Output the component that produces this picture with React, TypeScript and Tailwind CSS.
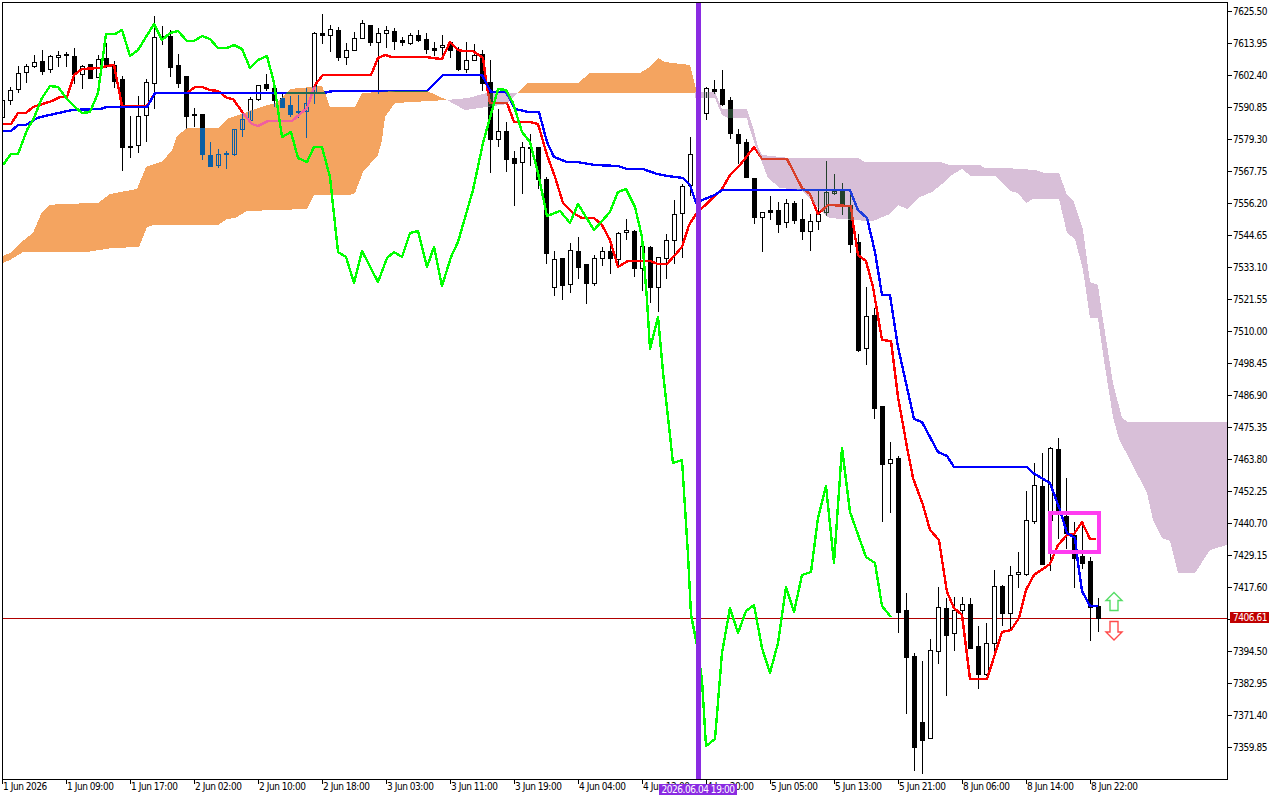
type Candle = [number, number, number, number, number]

// wick top, body top, body bottom, wick bottom, filled; one bar every 8px from x=2
const candles: Candle[] = [
  [100, 100, 117, 117, 0], [87, 90, 100, 104, 0], [66, 73, 89, 92, 0], [64, 66, 72, 82, 0], [55, 62, 66, 67, 0],
  [50, 61, 71, 74, 1], [55, 56, 69, 72, 0], [51, 55, 57, 66, 0], [52, 54, 55, 66, 1], [48, 56, 74, 83, 1],
  [65, 66, 74, 88, 0], [64, 64, 78, 78, 1], [55, 59, 77, 77, 0], [43, 58, 65, 67, 1], [61, 65, 81, 87, 1],
  [76, 79, 147, 170, 1], [116, 146, 147, 157, 1], [96, 116, 145, 152, 0], [79, 82, 115, 141, 0], [16, 37, 83, 108, 0],
  [26, 36, 38, 44, 1], [30, 36, 67, 76, 1], [54, 65, 83, 87, 1], [76, 76, 116, 128, 1], [108, 114, 115, 126, 1],
  [114, 114, 154, 159, 1], [142, 155, 166, 166, 1], [149, 154, 165, 167, 0], [151, 153, 154, 168, 1], [129, 129, 154, 155, 0],
  [112, 119, 129, 136, 0], [97, 99, 120, 122, 0], [85, 85, 99, 100, 0], [74, 84, 88, 90, 1], [88, 88, 100, 106, 1],
  [93, 98, 107, 107, 1], [96, 105, 114, 116, 1], [95, 111, 112, 117, 1], [88, 103, 111, 137, 0], [32, 33, 92, 103, 0],
  [14, 33, 35, 43, 1], [25, 29, 35, 51, 0], [27, 30, 57, 60, 1], [43, 50, 57, 64, 0], [32, 38, 50, 50, 0],
  [20, 23, 38, 38, 0], [25, 25, 42, 45, 1], [28, 33, 42, 93, 0], [26, 30, 33, 47, 0], [28, 31, 41, 49, 1],
  [37, 40, 42, 45, 1], [33, 35, 43, 44, 0], [30, 35, 40, 41, 1], [33, 39, 49, 53, 1], [42, 48, 50, 55, 1],
  [35, 45, 47, 57, 0], [42, 42, 50, 57, 1], [47, 49, 69, 70, 1], [42, 60, 69, 72, 0], [44, 55, 60, 60, 0],
  [50, 54, 83, 90, 1], [60, 82, 139, 172, 1], [109, 131, 139, 146, 0], [122, 131, 159, 171, 1], [151, 158, 163, 205, 1],
  [142, 147, 162, 193, 0], [134, 147, 148, 165, 1], [147, 147, 179, 188, 1], [177, 179, 253, 263, 1], [251, 259, 287, 295, 0],
  [258, 258, 285, 299, 1], [243, 250, 284, 292, 0], [237, 251, 267, 278, 1], [264, 264, 283, 303, 1], [255, 258, 283, 285, 0],
  [247, 251, 258, 265, 0], [238, 251, 258, 273, 1], [232, 233, 259, 265, 0], [219, 230, 232, 239, 0], [230, 231, 268, 276, 1],
  [246, 246, 268, 290, 0], [246, 247, 287, 302, 1], [257, 257, 287, 311, 0], [234, 240, 258, 278, 0], [200, 214, 240, 263, 0],
  [184, 186, 213, 257, 0], [137, 154, 185, 195, 0], [150, 160, 200, 210, 0], [87, 88, 113, 119, 0], [80, 89, 91, 93, 1],
  [70, 89, 104, 105, 1], [97, 100, 133, 138, 1], [129, 134, 143, 163, 1], [139, 142, 177, 177, 1], [178, 178, 217, 223, 1],
  [212, 212, 217, 251, 0], [196, 210, 212, 219, 1], [202, 210, 224, 232, 1], [199, 203, 222, 227, 0], [201, 203, 220, 223, 1],
  [199, 219, 231, 239, 1], [214, 221, 231, 250, 0], [191, 214, 221, 229, 0], [161, 192, 212, 215, 0], [174, 191, 193, 194, 0],
  [183, 191, 204, 214, 1], [193, 205, 244, 252, 1], [234, 242, 350, 351, 1], [287, 316, 348, 364, 0], [308, 315, 408, 418, 1],
  [406, 406, 464, 521, 1], [442, 459, 463, 512, 0], [456, 458, 612, 632, 1], [593, 610, 657, 713, 1], [653, 656, 747, 770, 1],
  [661, 722, 740, 773, 1], [639, 650, 738, 738, 0], [587, 607, 651, 663, 0], [598, 608, 635, 695, 1], [597, 610, 633, 650, 0],
  [597, 604, 610, 617, 0], [598, 604, 648, 648, 1], [626, 646, 674, 688, 1], [623, 643, 674, 675, 0], [570, 586, 643, 650, 0],
  [585, 586, 613, 625, 1], [566, 575, 613, 629, 0], [552, 572, 574, 587, 0], [491, 520, 574, 575, 0], [463, 485, 521, 523, 0],
  [453, 486, 564, 564, 1], [447, 448, 520, 570, 0], [438, 449, 512, 538, 1], [478, 516, 533, 548, 1], [522, 535, 558, 587, 1],
  [522, 556, 563, 568, 1], [557, 561, 607, 640, 1], [598, 606, 618, 631, 1],
]

const redLine =
  '3,124 11,124 18,113 26,113 33,107 52,101 60,97 67,97 74,75 82,69 100,68 107,66 114,65 122,106 147,106 155,93 187,93 195,87 202,87 210,90 218,91 227,98 233,99 243,113 252,124 258,126 268,121 292,121 307,108 315,85 323,75 371,75 378,58 385,55 392,57 427,57 432,58 442,59 450,42 458,50 463,51 473,51 483,58 487,87 490,103 507,103 514,122 530,122 538,124 547,155 555,177 563,203 573,213 582,218 594,218 602,225 610,240 618,267 628,261 650,261 658,264 667,264 682,247 689,225 696,214 722,189 730,175 740,165 754,147 762,159 787,159 802,188 810,194 818,214 828,205 851,206 853,223 858,255 866,261 873,287 882,340 891,341 898,397 907,447 913,478 923,505 930,530 939,540 947,592 954,608 962,615 970,679 987,679 1002,632 1011,630 1019,618 1026,590 1034,575 1050,564 1058,545 1067,535 1074,534 1082,522 1090,539 1096,539'

const blueLine =
  '3,131 11,131 18,125 26,125 37,118 45,116 72,110 100,109 107,107 147,107 155,93 323,93 333,91 427,91 443,75 482,75 491,92 506,92 515,109 528,112 539,112 547,142 554,157 567,162 577,162 595,165 618,166 627,169 643,169 657,174 668,176 683,178 690,185 696,203 707,198 715,195 722,190 850,190 858,210 867,218 875,252 882,295 890,295 898,347 914,419 922,422 938,452 947,456 954,467 1027,467 1033,473 1050,483 1060,510 1067,533 1075,538 1078,563 1082,591 1090,606 1098,606'

const greenLine =
  '3,165 11,154 18,154 27,130 34,118 42,98 50,86 58,87 67,99 75,107 82,113 90,112 98,93 106,34 115,34 122,30 130,56 138,50 154,24 162,40 170,33 178,31 187,41 194,41 202,36 210,39 218,48 227,48 234,45 242,49 250,68 258,60 267,56 274,83 282,137 291,132 298,158 307,162 314,147 322,147 330,177 338,252 346,257 354,283 362,251 378,282 387,258 394,252 402,257 410,233 418,231 427,267 434,247 442,286 451,257 458,242 473,190 483,143 498,89 506,90 513,103 522,132 530,142 538,173 547,216 560,211 570,223 578,204 594,230 610,212 618,192 626,189 635,207 642,237 647,300 650,349 658,317 663,372 673,463 682,460 688,555 691,615 697,645 702,680 706,746 715,739 722,653 730,608 738,633 746,611 754,605 762,648 770,673 778,643 786,587 794,612 802,575 811,572 818,518 826,486 834,563 842,448 850,512 866,557 875,563 882,606 891,617'

const orangeCloud =
  '3,256 10,253 20,243 33,233 42,212 50,205 60,204 98,203 110,194 137,189 146,167 163,161 172,150 177,136 187,128 218,128 227,119 267,105 277,103 290,89 322,86 325,93 330,107 355,107 362,93 396,91 427,91 447,100 395,103 385,117 382,140 378,155 363,172 355,193 350,195 314,195 307,209 247,211 235,218 227,219 218,225 153,225 147,227 139,247 112,248 87,252 23,252 10,260 3,263'

const orangeCloud2 = '518,93 522,88 528,83 578,83 590,73 640,73 650,67 658,58 665,62 690,65 693,77 697,93'

const purpleCloud = '447,100 468,98 487,93 517,93 507,104 487,107 465,110'

const purpleCloud2 =
  '695,92 715,92 722,109 747,109 753,127 758,147 762,155 790,158 858,158 865,162 940,162 950,165 980,165 985,168 1005,168 1035,170 1045,173 1059,173 1067,195 1074,202 1083,230 1090,282 1098,285 1103,320 1113,383 1122,418 1128,422 1227,422 1227,545 1210,550 1195,573 1178,573 1170,541 1162,538 1153,520 1147,493 1130,460 1119,439 1113,417 1105,367 1098,318 1090,318 1083,270 1075,239 1067,233 1059,199 1033,199 1026,203 1018,193 1010,191 995,176 971,176 962,169 950,176 947,180 932,192 920,197 907,209 898,205 890,214 873,221 867,221 830,218 825,215 802,190 780,188 768,178 761,160 756,147 749,127 747,118 728,118 722,115 715,98 695,98'

const prices = [
  '7625.50', '7613.95', '7602.40', '7590.85', '7579.30', '7567.75', '7556.20', '7544.65', '7533.10', '7521.55', '7510.00', '7498.45',
  '7486.90', '7475.35', '7463.80', '7452.25', '7440.70', '7429.15', '7417.60', '7406.05', '7394.50', '7382.95', '7371.40', '7359.85',
]

const times = [
  '1 Jun 2026', '1 Jun 09:00', '1 Jun 17:00', '2 Jun 02:00', '2 Jun 10:00', '2 Jun 18:00', '3 Jun 03:00', '3 Jun 11:00', '3 Jun 19:00',
  '4 Jun 04:00', '4 Jun 12:00', '4 Jun 20:00', '5 Jun 05:00', '5 Jun 13:00', '5 Jun 21:00', '8 Jun 06:00', '8 Jun 14:00', '8 Jun 22:00',
]

function Bars({ ink, paper }: { ink: string; paper: string }) {
  return (
    <g shapeRendering="crispEdges">
      {candles.map(([high, top, bottom, low, filled], i) => {
        const x = 2 + i * 8
        return (
          <g key={i}>
            <rect x={x} y={high} width={1} height={low - high + 1} fill={ink} />
            {filled ? (
              <rect x={x - 2} y={top} width={5} height={bottom - top + 1} fill={ink} />
            ) : (
              <rect x={x - 1.5} y={top + 0.5} width={4} height={bottom - top} fill={paper} stroke={ink} />
            )}
          </g>
        )
      })}
    </g>
  )
}

function Lines({ red, blue }: { red: string; blue: string }) {
  return (
    <g fill="none" strokeWidth={2.4} shapeRendering="crispEdges" strokeLinejoin="round">
      <polyline points={redLine} stroke={red} />
      <polyline points={blueLine} stroke={blue} />
      <polyline points={greenLine} stroke="#00ff00" />
    </g>
  )
}

function Chart() {
  return (
    <svg width={1224} height={776} viewBox="3 3 1224 776" className="block">
      <defs>
        <clipPath id="orange">
          <polygon points={orangeCloud} />
          <polygon points={orangeCloud2} />
        </clipPath>
        <clipPath id="purple">
          <polygon points={purpleCloud} />
          <polygon points={purpleCloud2} />
        </clipPath>
      </defs>

      <rect x={3} y={618} width={1224} height={1} fill="#b00000" shapeRendering="crispEdges" />
      <Bars ink="#000000" paper="#ffffff" />
      <Lines red="#ff0000" blue="#0000ff" />

      <g shapeRendering="crispEdges">
        <polygon points={orangeCloud} fill="#f4a460" />
        <polygon points={orangeCloud2} fill="#f4a460" />
        <polygon points={purpleCloud} fill="#d8bfd8" />
        <polygon points={purpleCloud2} fill="#d8bfd8" />
      </g>

      <g clipPath="url(#orange)">
        <Bars ink="#0b5fa5" paper="none" />
        <Lines red="#f0609f" blue="#236a50" />
      </g>
      <g clipPath="url(#purple)">
        <Bars ink="#23402b" paper="none" />
        <Lines red="#d9402a" blue="#1e3fdc" />
      </g>

      <rect x={696} y={3} width={5} height={776} fill="#8a2be2" shapeRendering="crispEdges" />
      <rect x={1050} y={513} width={49} height={39} fill="none" stroke="#ff3cf0" strokeWidth={4} shapeRendering="crispEdges" />

      <polygon points="1114,592.5 1122,600.5 1118,600.5 1118,610.5 1110,610.5 1110,600.5 1106,600.5" fill="#ffffff" stroke="#55dd66" strokeWidth={1.4} />
      <polygon points="1110,621.5 1118,621.5 1118,632 1122,632 1114,640 1106,632 1110,632" fill="#ffffff" stroke="#ff4a4a" strokeWidth={1.4} />
    </svg>
  )
}

export default function App() {
  return (
    <div className="relative w-[1280px] h-[800px] overflow-hidden bg-white pt-[2px] pl-[2px] text-[10px] leading-none tracking-[-0.45px] text-black font-['DejaVu_Sans_Condensed','DejaVu_Sans',sans-serif]">
      <div className="flex items-start">
        <div className="w-[1226px] h-[778px] border border-black">
          <Chart />
        </div>
        <div className="flex flex-col gap-[19px] pt-[3px]">
          {prices.map(p => (
            <div key={p} className="flex items-center h-[13px]">
              <div className="w-[4px] h-px bg-black" />
              <span className="ml-[1px]">{p}</span>
            </div>
          ))}
        </div>
      </div>

      <div className="flex">
        {times.map(t => (
          <div key={t} className="w-[64px] shrink-0 flex">
            <div className="w-px h-[4px] bg-black" />
            <span className="pt-[2px] whitespace-nowrap">{t}</span>
          </div>
        ))}
      </div>

      <div className="absolute left-[1230px] top-[612px] w-[39px] h-[11px] bg-[#c00000] text-white pl-[3px] flex items-center">7406.61</div>
      <div className="absolute left-[659px] top-[784px] w-[78px] h-[11px] bg-[#8a2be2] text-white flex items-center justify-center whitespace-nowrap">2026.06.04 19:00</div>
    </div>
  )
}
